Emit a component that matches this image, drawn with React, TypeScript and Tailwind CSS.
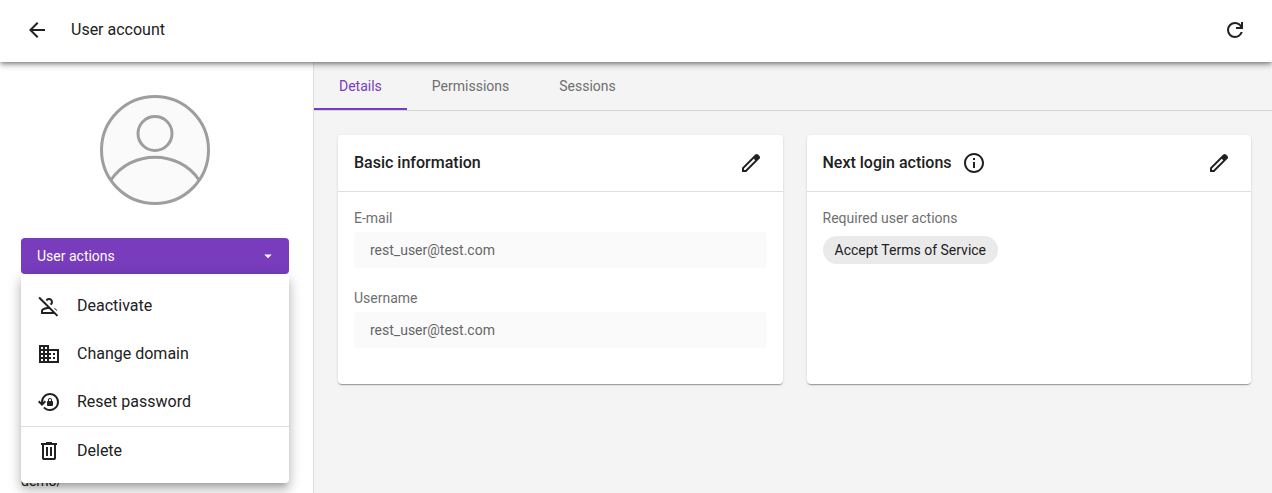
import type { ReactNode } from "react";
import { MdArrowBack, MdArrowDropDown, MdInfoOutline, MdOutlinePersonOff } from "react-icons/md";

function Glyph({ d }: { d: string }) {
  return (
    <svg viewBox="0 -960 960 960" className="size-6 shrink-0" fill="currentColor" aria-hidden="true">
      <path d={d} />
    </svg>
  );
}

const REFRESH =
  "M480-160q-134 0-227-93t-93-227q0-134 93-227t227-93q69 0 132 28.5T720-690v-110h80v280H520v-80h168q-32-56-87.5-88T480-720q-100 0-170 70t-70 170q0 100 70 170t170 70q77 0 139-44t87-116h84q-28 106-114 173t-196 67Z";
const TRASH =
  "M280-120q-33 0-56.5-23.5T200-200v-520h-40v-80h200v-40h240v40h200v80h-40v520q0 33-23.5 56.5T680-120H280Zm400-600H280v520h400v-520ZM360-280h80v-360h-80v360Zm160 0h80v-360h-80v360Z";
const DOMAIN =
  "M80-120v-720h400v160h400v560H80Zm80-80h80v-80h-80v80Zm0-160h80v-80h-80v80Zm0-160h80v-80h-80v80Zm0-160h80v-80h-80v80Zm160 480h80v-80h-80v80Zm0-160h80v-80h-80v80Zm0-160h80v-80h-80v80Zm0-160h80v-80h-80v80Zm160 480h320v-400H480v80h80v80h-80v80h80v80h-80v80Zm160-240v-80h80v80h-80Zm0 160v-80h80v80h-80Z";
const EDIT =
  "M200-200h57l391-391-57-57-391 391v57Zm-80 80v-170l528-527q12-11 26.5-17t30.5-6q16 0 31 6t26 18l55 56q12 11 17.5 26t5.5 30q0 16-5.5 30.5T817-647L290-120H120Z";
const LOCK_RESET =
  "M520-120q-78 0-147.500-31.500T250-236l56-56q38 43 93 67.500T520-200q117 0 198.500-81.500T800-480q0-117-81.500-198.500T520-760q-117 0-198.500 81.500T240-480v8l64-64 56 56-160 160L40-480l56-56 64 64v-8q0-75 28.500-140.500t77-114q48.500-48.500 114-77T520-840q75 0 140.500 28.500t114 77q48.500 48.500 77 114T880-480q0 75-28.500 140.500t-77 114q-48.500 48.500-114 77T520-120Zm-80-200q-17 0-28.500-11.500T400-360v-120q0-17 11.500-28.500T440-520v-40q0-33 23.500-56.500T520-640q33 0 56.500 23.500T600-560v40q17 0 28.500 11.500T640-480v120q0 17-11.500 28.500T600-320H440Zm40-200h80v-40q0-17-11.500-28.500T520-600q-17 0-28.500 11.500T480-560v40Z";

function Avatar() {
  return (
    <svg viewBox="0 0 110 110" className="size-[110px]" fill="none" stroke="#9e9e9e" strokeWidth="3" role="img" aria-label="Avatar">
      <circle cx="55" cy="55" r="53.5" fill="#fafafa" />
      <circle cx="55" cy="38.500" r="17" />
      <path d="M11 85 C31 54.500 79 54.500 99 85" />
    </svg>
  );
}

function MenuItem({ icon, label }: { icon: ReactNode; label: string }) {
  return (
    <button type="button" role="menuitem" className="flex h-12 w-full items-center gap-4 px-4 text-left text-base">
      {icon}
      {label}
    </button>
  );
}

function Card({ title, extra, children }: { title: string; extra?: ReactNode; children: ReactNode }) {
  return (
    <section className="rounded bg-white shadow-[0_2px_1px_-1px_rgba(0,0,0,0.2),0_1px_1px_0_rgba(0,0,0,0.14),0_1px_3px_0_rgba(0,0,0,0.12)]">
      <header className="flex h-[57px] items-center justify-between border-b border-[#dedede] px-4">
        <div className="flex items-center gap-2.5">
          <h2 className="text-base font-medium">{title}</h2>
          {extra}
        </div>
        <button type="button" aria-label={`Edit ${title}`} className="px-1">
          <Glyph d={EDIT} />
        </button>
      </header>
      <div className="px-4 pt-4 pb-9">{children}</div>
    </section>
  );
}

function Field({ id, label, value }: { id: string; label: string; value: string }) {
  return (
    <div className="flex flex-col gap-1">
      <label htmlFor={id} className="text-sm text-[#6f6f6f]">
        {label}
      </label>
      <input id={id} readOnly value={value} className="h-9 w-full rounded bg-[#fafafa] px-4 text-sm text-[#666666]" />
    </div>
  );
}

const TABS = ["Details", "Permissions", "Sessions"];

export default function App() {
  return (
    <div className="flex h-screen flex-col overflow-hidden bg-[#f4f4f4] font-[Roboto,sans-serif] text-[#212121]">
      <header className="z-10 flex h-[62px] shrink-0 items-center justify-between bg-white px-[25px] pb-[3px] shadow-[0_2px_4px_-1px_rgba(0,0,0,0.4),0_4px_5px_0_rgba(0,0,0,0.14),0_1px_10px_0_rgba(0,0,0,0.12)]">
        <div className="flex items-center gap-[22px]">
          <a href="#users" aria-label="Back">
            <MdArrowBack className="size-6" />
          </a>
          <h1 className="text-base">User account</h1>
        </div>
        <button type="button" aria-label="Refresh">
          <Glyph d={REFRESH} />
        </button>
      </header>

      <div className="flex min-h-0 flex-1">
        <aside className="w-[314px] shrink-0 border-r border-[#dedede] bg-white pt-[33px] pr-6 pl-[21px]">
          <div className="flex justify-center">
            <Avatar />
          </div>
          <div className="relative mt-[33px]">
            <button
              type="button"
              aria-haspopup="menu"
              aria-expanded="true"
              className="flex h-9 w-full items-center justify-between rounded bg-[#783cbd] pr-3 pl-4 text-sm text-white"
            >
              User actions
              <MdArrowDropDown className="size-[18px]" />
            </button>
            <div
              role="menu"
              className="absolute inset-x-0 top-full rounded bg-white py-2 shadow-[0_5px_5px_-3px_rgba(0,0,0,0.2),0_8px_10px_1px_rgba(0,0,0,0.14),0_3px_14px_2px_rgba(0,0,0,0.12)]"
            >
              <MenuItem icon={<MdOutlinePersonOff className="size-6" />} label="Deactivate" />
              <MenuItem icon={<Glyph d={DOMAIN} />} label="Change domain" />
              <MenuItem icon={<Glyph d={LOCK_RESET} />} label="Reset password" />
              <hr className="border-[#dedede]" />
              <MenuItem icon={<Glyph d={TRASH} />} label="Delete" />
            </div>
          </div>
          <p className="mt-[197px] text-sm">demo/</p>
        </aside>

        <main className="min-w-0 flex-1">
          <div role="tablist" className="flex h-[49px] border-b border-[#d6d6d6]">
            {TABS.map((tab, i) => (
              <button
                key={tab}
                type="button"
                role="tab"
                aria-selected={i === 0}
                className={
                  i === 0
                    ? "border-y-2 border-t-transparent border-b-[#783cbd] px-[25px] text-sm text-[#783cbd]"
                    : "border-y-2 border-transparent px-[25px] text-sm text-[#6f6f6f]"
                }
              >
                {tab}
              </button>
            ))}
          </div>
          <div className="grid grid-cols-2 gap-6 py-6 pr-[21px] pl-6">
            <Card title="Basic information">
              <div className="flex flex-col gap-5">
                <Field id="email" label="E-mail" value="rest_user@test.com" />
                <Field id="username" label="Username" value="rest_user@test.com" />
              </div>
            </Card>
            <Card title="Next login actions" extra={<MdInfoOutline className="size-6" />}>
              <p className="text-sm text-[#6f6f6f]">Required user actions</p>
              <span className="mt-2 inline-flex h-7 items-center rounded-full bg-[#eaeaea] px-3 text-sm">
                Accept Terms of Service
              </span>
            </Card>
          </div>
        </main>
      </div>
    </div>
  );
}
